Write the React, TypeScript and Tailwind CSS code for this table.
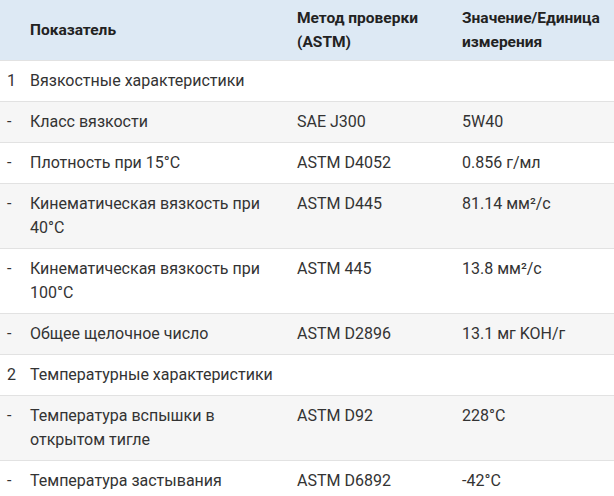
const rows: [string, string, string, string][] = [
  ["1", "Вязкостные характеристики", "", ""],
  ["-", "Класс вязкости", "SAE J300", "5W40"],
  ["-", "Плотность при 15°C", "ASTM D4052", "0.856 г/мл"],
  ["-", "Кинематическая вязкость при 40°C", "ASTM D445", "81.14 мм²/с"],
  ["-", "Кинематическая вязкость при 100°C", "ASTM 445", "13.8 мм²/с"],
  ["-", "Общее щелочное число", "ASTM D2896", "13.1 мг KOH/г"],
  ["2", "Температурные характеристики", "", ""],
  ["-", "Температура вспышки в открытом тигле", "ASTM D92", "228°C"],
  ["-", "Температура застывания", "ASTM D6892", "-42°C"],
];

export default function App() {
  return (
    <div className="w-[614px] h-[496px] overflow-hidden bg-white font-['Roboto',sans-serif] text-[16px] leading-6 text-[#333]">
      <table className="w-full table-fixed border-collapse">
        <colgroup>
          <col className="w-[22px]" />
          <col className="w-[267px]" />
          <col className="w-[165px]" />
          <col />
        </colgroup>
        <thead>
          <tr className="bg-[#dde9f4] text-[#222] font-bold text-[15.5px]">
            <th className="pl-[7px] py-[6px]"></th>
            <th className="px-2 py-[6px] text-left align-middle">Показатель</th>
            <th className="px-2 py-[6px] text-left align-middle">Метод проверки (ASTM)</th>
            <th className="px-2 py-[6px] text-left align-middle">Значение/Единица измерения</th>
          </tr>
        </thead>
        <tbody>
          {rows.map((r, i) => (
            <tr key={i} className={`border-t border-[#e2e2e2] ${i % 2 === 1 ? "bg-[#f6f6f6]" : "bg-white"}`}>
              <td className="pl-[7px] py-2 align-top">{r[0]}</td>
              <td className="px-2 py-2 align-top">{r[1]}</td>
              <td className="px-2 py-2 align-top">{r[2]}</td>
              <td className="px-2 py-2 align-top">{r[3]}</td>
            </tr>
          ))}
        </tbody>
      </table>
    </div>
  );
}
